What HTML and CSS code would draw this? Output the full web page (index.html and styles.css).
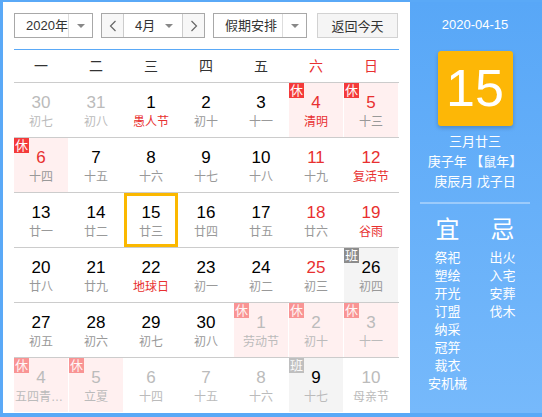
FILE: index.html
```html
<!DOCTYPE html>
<html lang="zh-CN">
  <head>
    <meta charset="UTF-8" />
    <title>万年历</title>
    <link rel="stylesheet" href="styles.css">
  </head>
  <body>
    <div class="calendar">
      <div class="main">
        <!-- 工具栏 -->
        <div class="toolbar">
          <div class="select year">
            <span class="value">2020年</span>
            <span class="caret"><i></i></span>
          </div>
          <div class="select month">
            <span class="step prev">
              <svg width="8" height="12" viewBox="0 0 8 12"><polyline points="6.5,1 1.5,6 6.5,11" fill="none" stroke="#666" stroke-width="1.2"/></svg>
            </span>
            <span class="value">4月</span>
            <span class="caret plain"><i></i></span>
            <span class="step next">
              <svg width="8" height="12" viewBox="0 0 8 12"><polyline points="1.5,1 6.5,6 1.5,11" fill="none" stroke="#666" stroke-width="1.2"/></svg>
            </span>
          </div>
          <div class="select holiday">
            <span class="value">假期安排</span>
            <span class="caret"><i></i></span>
          </div>
          <button class="today-btn">返回今天</button>
        </div>

        <!-- 星期 -->
        <div class="week">
          <span>一</span><span>二</span><span>三</span><span>四</span><span>五</span>
          <span class="red">六</span><span class="red">日</span>
        </div>

        <!-- 日期 -->
        <div class="row">
          <div class="day other"><div class="num">30</div><div class="lunar">初七</div></div>
          <div class="day other"><div class="num">31</div><div class="lunar">初八</div></div>
          <div class="day fest"><div class="num">1</div><div class="lunar">愚人节</div></div>
          <div class="day"><div class="num">2</div><div class="lunar">初十</div></div>
          <div class="day"><div class="num">3</div><div class="lunar">十一</div></div>
          <div class="day rest weekend fest"><span class="tag">休</span><div class="num">4</div><div class="lunar">清明</div></div>
          <div class="day rest weekend"><span class="tag">休</span><div class="num">5</div><div class="lunar">十三</div></div>
        </div>
        <div class="row">
          <div class="day rest weekend"><span class="tag">休</span><div class="num">6</div><div class="lunar">十四</div></div>
          <div class="day"><div class="num">7</div><div class="lunar">十五</div></div>
          <div class="day"><div class="num">8</div><div class="lunar">十六</div></div>
          <div class="day"><div class="num">9</div><div class="lunar">十七</div></div>
          <div class="day"><div class="num">10</div><div class="lunar">十八</div></div>
          <div class="day weekend"><div class="num">11</div><div class="lunar">十九</div></div>
          <div class="day weekend fest"><div class="num">12</div><div class="lunar">复活节</div></div>
        </div>
        <div class="row">
          <div class="day"><div class="num">13</div><div class="lunar">廿一</div></div>
          <div class="day"><div class="num">14</div><div class="lunar">廿二</div></div>
          <div class="day today"><div class="num">15</div><div class="lunar">廿三</div></div>
          <div class="day"><div class="num">16</div><div class="lunar">廿四</div></div>
          <div class="day"><div class="num">17</div><div class="lunar">廿五</div></div>
          <div class="day weekend"><div class="num">18</div><div class="lunar">廿六</div></div>
          <div class="day weekend fest"><div class="num">19</div><div class="lunar">谷雨</div></div>
        </div>
        <div class="row">
          <div class="day"><div class="num">20</div><div class="lunar">廿八</div></div>
          <div class="day"><div class="num">21</div><div class="lunar">廿九</div></div>
          <div class="day fest"><div class="num">22</div><div class="lunar">地球日</div></div>
          <div class="day"><div class="num">23</div><div class="lunar">初一</div></div>
          <div class="day"><div class="num">24</div><div class="lunar">初二</div></div>
          <div class="day weekend"><div class="num">25</div><div class="lunar">初三</div></div>
          <div class="day work"><span class="tag">班</span><div class="num">26</div><div class="lunar">初四</div></div>
        </div>
        <div class="row">
          <div class="day"><div class="num">27</div><div class="lunar">初五</div></div>
          <div class="day"><div class="num">28</div><div class="lunar">初六</div></div>
          <div class="day"><div class="num">29</div><div class="lunar">初七</div></div>
          <div class="day"><div class="num">30</div><div class="lunar">初八</div></div>
          <div class="day other rest"><span class="tag">休</span><div class="num">1</div><div class="lunar">劳动节</div></div>
          <div class="day other rest"><span class="tag">休</span><div class="num">2</div><div class="lunar">初十</div></div>
          <div class="day other rest"><span class="tag">休</span><div class="num">3</div><div class="lunar">十一</div></div>
        </div>
        <div class="row">
          <div class="day other rest"><span class="tag">休</span><div class="num">4</div><div class="lunar">五四青年节</div></div>
          <div class="day other rest"><span class="tag">休</span><div class="num">5</div><div class="lunar">立夏</div></div>
          <div class="day other"><div class="num">6</div><div class="lunar">十四</div></div>
          <div class="day other"><div class="num">7</div><div class="lunar">十五</div></div>
          <div class="day other"><div class="num">8</div><div class="lunar">十六</div></div>
          <div class="day other work"><span class="tag">班</span><div class="num">9</div><div class="lunar">十七</div></div>
          <div class="day other"><div class="num">10</div><div class="lunar">母亲节</div></div>
        </div>
      </div>

      <!-- 右侧详情 -->
      <div class="panel">
        <div class="date">2020-04-15</div>
        <div class="big-day">15</div>
        <div class="info">
          <p>三月廿三</p>
          <p>庚子年 【鼠年】</p>
          <p>庚辰月 戊子日</p>
        </div>
        <div class="divider"></div>
        <div class="yiji">
          <div class="col">
            <div class="title">宜</div>
            <p>祭祀</p><p>塑绘</p><p>开光</p><p>订盟</p><p>纳采</p><p>冠笄</p><p>裁衣</p><p>安机械</p>
          </div>
          <div class="col">
            <div class="title">忌</div>
            <p>出火</p><p>入宅</p><p>安葬</p><p>伐木</p>
          </div>
        </div>
      </div>
    </div>
  </body>
</html>
```

FILE: styles.css
```css
body {
  margin: 0;
  font-family: "Liberation Sans", "Noto Sans CJK SC", sans-serif;
}

.calendar {
  display: flex;
  height: 417px;
  box-sizing: border-box;
  border: solid #5aa9f7;
  border-width: 2px 0 4px 3px;
  background: #fff;
  overflow: hidden;
}

.main {
  width: 385px;
  padding: 11px 11px 0;
}

/* 工具栏 */
.toolbar {
  display: flex;
  height: 25px;
}

.select {
  display: flex;
  align-items: center;
  height: 25px;
  box-sizing: border-box;
  border: 1px solid #a8a8a8;
  background: #fff;
  font-size: 13px;
  color: #333;
}

.select .value {
  flex: 1;
  padding-left: 11px;
  line-height: 23px;
}

.select .caret {
  display: flex;
  align-items: center;
  justify-content: center;
  width: 23px;
  height: 23px;
  border-left: 1px solid #ddd;
}

.select .caret.plain {
  border-left: none;
}

.caret i {
  width: 0;
  height: 0;
  border-left: 4px solid transparent;
  border-right: 4px solid transparent;
  border-top: 4px solid #888;
}

.year {
  width: 79px;
}

.month {
  width: 104px;
  margin-left: 8px;
}

.month .step {
  display: flex;
  align-items: center;
  justify-content: center;
  width: 21px;
  height: 23px;
  background: #f7f7f7;
}

.month .prev {
  border-right: 1px solid #ccc;
}

.month .next {
  border-left: 1px solid #ccc;
}

.month .caret {
  width: 26px;
}

.holiday {
  width: 94px;
  margin-left: 8px;
}

.today-btn {
  width: 81px;
  height: 25px;
  margin-left: 10px;
  padding: 0;
  border: 1px solid #d2d2d2;
  background: #f5f5f5;
  font-family: inherit;
  font-size: 13px;
  color: #333;
}

/* 星期 */
.week {
  display: grid;
  grid-template-columns: repeat(7, 55px);
  margin-top: 11px;
  border-top: 1px solid #5aa9f7;
  border-bottom: 1px solid #ccc;
  height: 34px;
  box-sizing: border-box;
  line-height: 33px;
  font-size: 14px;
  color: #333;
}

.week span {
  width: 54px;
  text-align: center;
}

.week .red {
  color: #e83030;
}

/* 日期格 */
.row {
  display: grid;
  grid-template-columns: repeat(7, 55px);
  height: 55px;
  box-sizing: border-box;
  border-bottom: 1px solid #ccc;
}

.row:last-child {
  border-bottom: none;
}

.day {
  position: relative;
  width: 54px;
  height: 54px;
  box-sizing: border-box;
  padding-top: 10px;
  text-align: center;
}

.num {
  font-size: 17px;
  line-height: 20px;
  color: #000;
}

.lunar {
  padding: 0 1px;
  font-size: 12px;
  line-height: 18px;
  color: #999;
  white-space: nowrap;
  overflow: hidden;
  text-overflow: ellipsis;
}

.weekend .num {
  color: #e83030;
}

.fest .lunar {
  color: #e83030;
}

.rest {
  background: #fff0f0;
}

.work {
  background: #f4f4f4;
}

.other .num,
.other .lunar {
  color: #bbb;
}

.work .num {
  color: #000;
}

.tag {
  position: absolute;
  left: 0;
  top: 0;
  width: 15px;
  height: 15px;
  line-height: 15px;
  font-size: 13px;
  color: #fff;
  background: #f43a3a;
  text-align: center;
}

.work .tag {
  background: #8c8c8c;
}

.other .tag {
  opacity: 0.5;
}

.today {
  border: 3px solid #fbb800;
  padding-top: 7px;
}

/* 右侧详情 */
.panel {
  flex: 1;
  padding: 13px 12px 0 10px;
  background: linear-gradient(#58a7f7, #76b9fb);
  color: #fff;
  text-align: center;
}

.panel p {
  margin: 0;
}

.date {
  font-size: 13px;
  line-height: 20px;
}

.big-day {
  width: 75px;
  height: 75px;
  margin: 16px auto 0;
  border-radius: 3px;
  background: #fdb706;
  box-shadow: 0 2px 4px rgba(0, 0, 0, 0.2);
  font-size: 52px;
  line-height: 75px;
}

.info {
  margin-top: 6px;
  font-size: 13px;
  line-height: 20px;
}

.divider {
  height: 2px;
  margin-top: 10px;
  background: rgba(255, 255, 255, 0.35);
}

.yiji {
  display: flex;
  margin-top: 11px;
}

.yiji .col {
  width: 55px;
  font-size: 13px;
  line-height: 18px;
}

.yiji .title {
  margin-bottom: 4px;
  font-size: 24px;
  line-height: 30px;
}
```
